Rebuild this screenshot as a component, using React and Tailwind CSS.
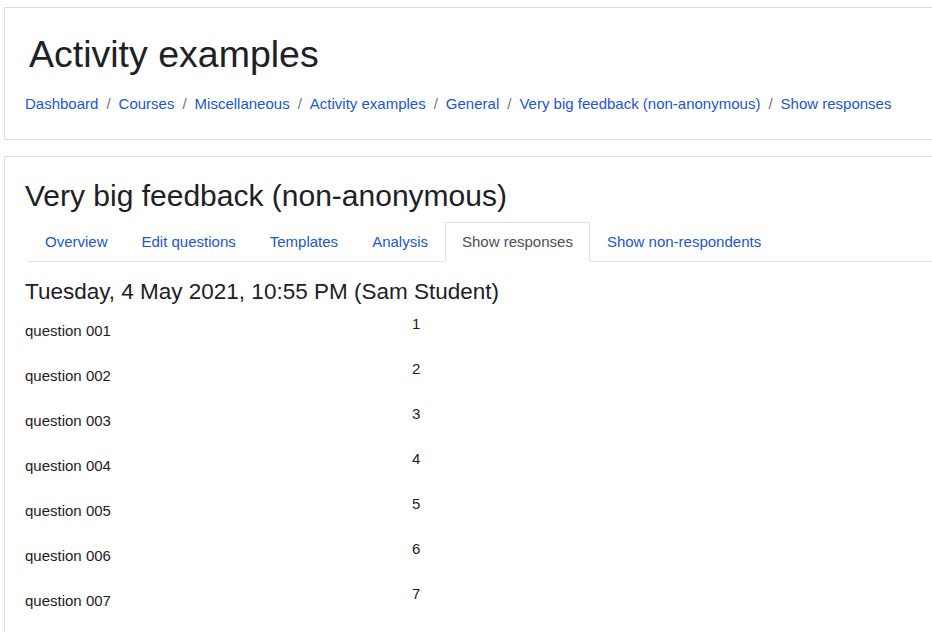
import React from "react";

const crumbs = [
  "Dashboard",
  "Courses",
  "Miscellaneous",
  "Activity examples",
  "General",
  "Very big feedback (non-anonymous)",
  "Show responses",
];

const tabs = [
  "Overview",
  "Edit questions",
  "Templates",
  "Analysis",
  "Show responses",
  "Show non-respondents",
];

const questions = [1, 2, 3, 4, 5, 6, 7];

export default function App() {
  return (
    <div
      className="w-[932px] h-[632px] overflow-hidden bg-white text-[#1d2125]"
      style={{ fontFamily: '"Liberation Sans", Arial, sans-serif' }}
    >
      <div className="w-[1000px] pl-[4px] pt-[7px]">
        <div className="border border-[#dfdfdf] px-[20px] pt-[24px] pb-[23px]">
          <h1 className="pl-[4px] text-[37.5px] leading-[1.2] font-normal">
            Activity examples
          </h1>
          <nav className="mt-[16px] flex text-[15px] leading-[22.5px]">
            {crumbs.map((c, i) => (
              <span key={c} className="flex">
                {i > 0 && (
                  <span className="px-[8px] text-[#6c757d]">/</span>
                )}
                <a className="text-[#1a56d6] cursor-pointer">{c}</a>
              </span>
            ))}
          </nav>
        </div>

        <div className="mt-[16px] border border-[#dfdfdf] px-[20px] pt-[21px] pb-[20px]">
          <h2 className="text-[30px] leading-[36px] font-normal mb-[8px]">
            Very big feedback (non-anonymous)
          </h2>
          <ul className="ml-[3px] flex border-b border-[#dee2e6] text-[15px] leading-[22.5px]">
            {tabs.map((t) => {
              const active = t === "Show responses";
              return (
                <li key={t} className="-mb-px">
                  <a
                    className={
                      active
                        ? "block px-[16px] py-[8px] border border-[#dee2e6] border-b-white bg-white text-[#495057]"
                        : "block px-[16px] py-[8px] border border-transparent text-[#1a56d6] cursor-pointer"
                    }
                  >
                    {t}
                  </a>
                </li>
              );
            })}
          </ul>
          <h3 className="mt-[16px] mb-[8px] text-[22.5px] leading-[27px] font-normal">
            Tuesday, 4 May 2021, 10:55 PM (Sam Student)
          </h3>
          <div className="flex flex-col text-[15px] leading-[22.5px]">
            {questions.map((n) => (
              <div key={n} className="grid grid-cols-[387px_1fr] h-[45px]">
                <div className="pt-[7px]">
                  question {String(n).padStart(3, "0")}
                </div>
                <div>{n}</div>
              </div>
            ))}
          </div>
        </div>
      </div>
    </div>
  );
}
